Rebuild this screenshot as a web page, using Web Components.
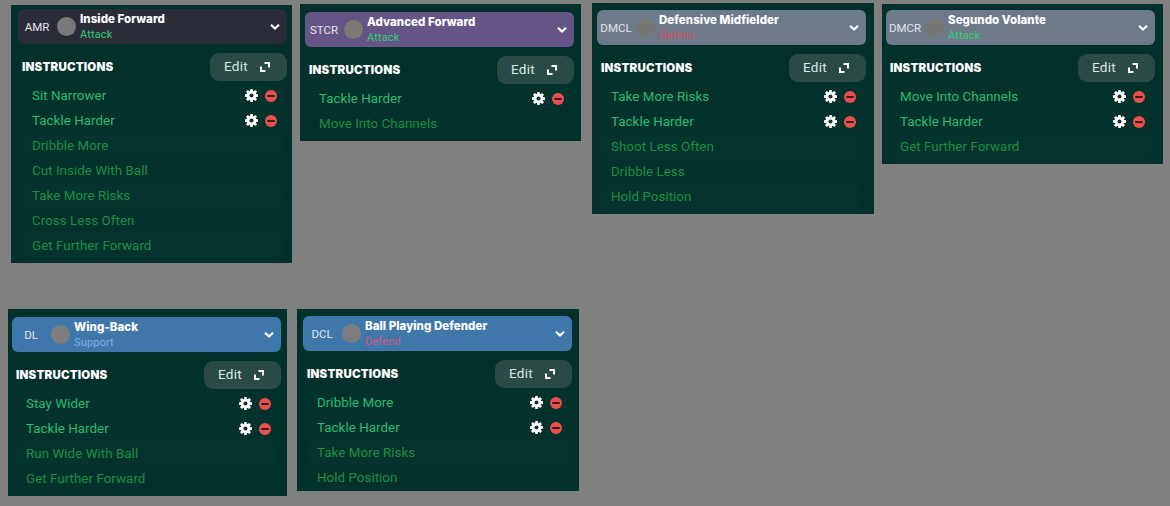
<!DOCTYPE html>
<html><head><meta charset="utf-8"><style>
html,body{margin:0;padding:0;background:#808080;}
body{width:1170px;height:506px;overflow:hidden;font-family:Roboto,"Liberation Sans",sans-serif;}
.line{display:flex;align-items:flex-start;}
</style></head><body>
<div class="line" style="height:309px">
<role-panel pos="AMR" role="Inside Forward" duty="Attack" style="--ml:11px;--mt:5px;--w:281px;--pt:4px;--pl:7px;--pr:5px;--head:#2a2d38;--duty:#2fcf78;--disc:#7a7a7a">
 <instr-row on>Sit Narrower</instr-row><instr-row on>Tackle Harder</instr-row><instr-row lit>Dribble More</instr-row><instr-row>Cut Inside With Ball</instr-row><instr-row lit>Take More Risks</instr-row><instr-row>Cross Less Often</instr-row><instr-row lit>Get Further Forward</instr-row>
</role-panel>
<role-panel pos="STCR" role="Advanced Forward" duty="Attack" style="--ml:8px;--mt:4px;--w:281px;--pt:8px;--pl:5px;--pr:7px;--head:#655486;--duty:#2fcf78;--disc:#7a7a72">
 <instr-row on>Tackle Harder</instr-row><instr-row>Move Into Channels</instr-row>
</role-panel>
<role-panel pos="DMCL" role="Defensive Midfielder" duty="Defend" style="--ml:11px;--mt:3px;--w:282px;--pt:7px;--pl:5px;--pr:8px;--head:#6e7a8a;--duty:#d9525c;--disc:#767675">
 <instr-row on>Take More Risks</instr-row><instr-row on>Tackle Harder</instr-row><instr-row lit>Shoot Less Often</instr-row><instr-row>Dribble Less</instr-row><instr-row lit>Hold Position</instr-row>
</role-panel>
<role-panel pos="DMCR" role="Segundo Volante" duty="Attack" style="--ml:8px;--mt:4px;--w:281px;--pt:6px;--pl:4px;--pr:8px;--head:#6e7a8a;--duty:#2fcf78;--disc:#767675">
 <instr-row on>Move Into Channels</instr-row><instr-row on>Tackle Harder</instr-row><instr-row lit>Get Further Forward</instr-row>
</role-panel>
</div>
<div class="line">
<role-panel pos="DL" role="Wing-Back" duty="Support" style="--ml:8px;--mt:0px;--w:279px;--pt:8px;--pl:4px;--pr:6px;--head:#3f77ab;--duty:#7fb1ec;--disc:#7d7d80">
 <instr-row on>Stay Wider</instr-row><instr-row on>Tackle Harder</instr-row><instr-row lit>Run Wide With Ball</instr-row><instr-row>Get Further Forward</instr-row>
</role-panel>
<role-panel pos="DCL" role="Ball Playing Defender" duty="Defend" style="--ml:10px;--mt:0px;--w:282px;--pt:7px;--pl:6px;--pr:7px;--pb:1px;--head:#3f77ab;--duty:#d4587e;--disc:#7d7d80">
 <instr-row on>Dribble More</instr-row><instr-row on>Tackle Harder</instr-row><instr-row lit>Take More Risks</instr-row><instr-row>Hold Position</instr-row>
</role-panel>
</div>
<template id="panel-t"><style>
:host{display:block;box-sizing:border-box;flex:none;width:var(--w);margin:var(--mt) 0 0 var(--ml);padding:var(--pt) var(--pr) var(--pb,5px) var(--pl);background:#02302b;color:#fff;}
.head{display:flex;align-items:center;height:35px;border-radius:6px;background:var(--head);box-sizing:border-box;padding:0 6px 0 0;}
.pos{width:38px;flex:none;text-align:center;font-size:11.5px;color:#e4e6ea;white-space:nowrap;}
.disc{width:19px;height:19px;border-radius:50%;background:var(--disc);flex:none;margin:0 4px 0 1px;}
.names{flex:1;display:flex;flex-direction:column;min-width:0;}
.role{font:800 11.5px/15px Inter,Roboto,sans-serif;letter-spacing:.05px;color:#fff;white-space:nowrap;}
.duty{font-size:11px;line-height:14px;margin-top:1px;margin-bottom:-1px;color:var(--duty);letter-spacing:.15px;}
.chev{flex:none;display:block;}
.bar{display:flex;align-items:center;justify-content:space-between;margin:9px 0 2px;height:28px;padding-left:4px;}
h3{margin:-1px 0 0;font:900 11.5px/14px Inter,Roboto,sans-serif;letter-spacing:.2px;color:#fff;}
.edit{width:77px;height:28px;border-radius:9px;background:#294a45;display:flex;align-items:center;box-sizing:border-box;padding:0 0 3px 14px;color:#dbe8e5;font-size:13.5px;letter-spacing:.3px;}
.edit svg{margin:3px 0 0 11px;display:block;}
.rows{display:flex;flex-direction:column;padding:0 4px;}
</style>
<div class="head"><span class="pos"></span><span class="disc"></span><div class="names"><span class="role"></span><span class="duty"></span></div>
<svg class="chev" width="12" height="8" viewBox="0 0 12 8"><path d="M2 1.8 6 5.6 10 1.8" fill="none" stroke="#fff" stroke-width="2.1"/></svg></div>
<div class="bar"><h3>INSTRUCTIONS</h3><div class="edit">Edit<svg width="12" height="12" viewBox="0 0 12 12"><path d="M5.5 2H10V6.5M2 5.5V10H6.5" fill="none" stroke="#fff" stroke-width="2"/></svg></div></div>
<div class="rows"><slot></slot></div>
</template>
<template id="row-t"><style>
:host{display:flex;align-items:center;height:25px;box-sizing:border-box;padding:0 6px 0 10px;border-radius:5px;font-size:13.4px;letter-spacing:.02px;color:#1c8f42;white-space:nowrap;}
:host([lit]){background:#04332e;}
:host([on]){color:#2abb6e;background:#03322d;}
.t{flex:1;}
.ic{display:none;align-items:center;gap:7px;}
:host([on]) .ic{display:flex;}
svg{display:block;}
</style><span class="t"><slot></slot></span><span class="ic">
<svg width="13" height="13" viewBox="0 0 14 14"><g fill="#fff"><rect x="5.5" y="0" width="3" height="14" rx=".5"/><rect x="5.5" y="0" width="3" height="14" rx=".5" transform="rotate(45 7 7)"/><rect x="5.5" y="0" width="3" height="14" rx=".5" transform="rotate(90 7 7)"/><rect x="5.5" y="0" width="3" height="14" rx=".5" transform="rotate(135 7 7)"/></g><circle cx="7" cy="7" r="5.2" fill="#fff"/><circle cx="7" cy="7" r="2.2" fill="#18332f"/></svg>
<svg width="12" height="12" viewBox="0 0 12 12"><circle cx="6" cy="6" r="6" fill="#e9504f"/><rect x="2.3" y="5" width="7.4" height="2" fill="#3a1a1a"/></svg>
</span></template>
<script>
class RolePanel extends HTMLElement{constructor(){super();const s=this.attachShadow({mode:'open'});s.appendChild(document.getElementById('panel-t').content.cloneNode(true));
s.querySelector('.pos').textContent=this.getAttribute('pos');s.querySelector('.role').textContent=this.getAttribute('role');s.querySelector('.duty').textContent=this.getAttribute('duty');}}
class InstrRow extends HTMLElement{constructor(){super();this.attachShadow({mode:'open'}).appendChild(document.getElementById('row-t').content.cloneNode(true));}}
customElements.define('role-panel',RolePanel);customElements.define('instr-row',InstrRow);
</script>
</body></html>
